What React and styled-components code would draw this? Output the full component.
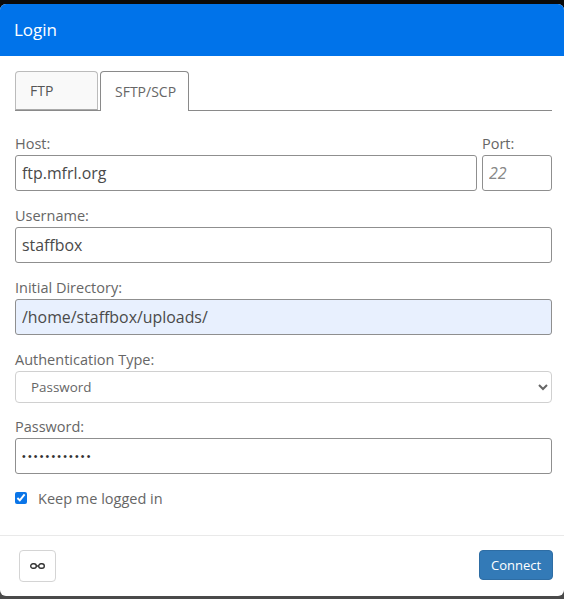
import styled, { createGlobalStyle } from 'styled-components'

const GlobalStyle = createGlobalStyle`
  html, body {
    margin: 0;
    padding: 0;
    background: #000;
    font-family: "Open Sans", "Liberation Sans", sans-serif;
  }
  * { box-sizing: border-box; }
`

const Backdrop = styled.div`
  width: 564px;
  height: 599px;
  padding: 4px 0 3px;
  overflow: hidden;
  background: linear-gradient(#0a0a0a 0 50%, #4a4a4a 50% 100%);
`

const Dialog = styled.div`
  height: 592px;
  background: #fff;
  border-radius: 6px;
  overflow: hidden;
  display: flex;
  flex-direction: column;
`

const Header = styled.div`
  height: 52px;
  padding: 0 14px 2px;
  display: flex;
  align-items: center;
  background: #0073ea;
  color: #fff;
  font-size: 17px;
  flex: none;
`

const Body = styled.div`
  flex: 1;
  min-height: 0;
  padding: 15px 12px 0 15px;
`

const Tabs = styled.div`
  display: flex;
  height: 40px;
  gap: 2px;
  border-bottom: 1px solid #8a8a8a;
`

const Tab = styled.div`
  width: ${(p) => p.$width}px;
  height: ${(p) => (p.$active ? 40 : 39)}px;
  display: flex;
  align-items: center;
  padding-left: 14px;
  font-size: 14px;
  color: ${(p) => (p.$active ? '#666' : '#555')};
  background: ${(p) => (p.$active ? '#fff' : '#f9f9f9')};
  border: 1px solid ${(p) => (p.$active ? '#8a8a8a' : '#bbb')};
  border-bottom: ${(p) => (p.$active ? '0' : '1px solid #aaa')};
  border-radius: 4px 4px 0 0;
`

const Row = styled.div`
  display: flex;
  gap: 5px;
  margin-top: ${(p) => p.$top || 16}px;
`

const Field = styled.label`
  display: block;
  flex: ${(p) => (p.$width ? `0 0 ${p.$width}px` : '1')};
  min-width: 0;
`

const Label = styled.div`
  height: 20px;
  font-size: 14.5px;
  line-height: 17px;
  color: #666;
`

const Input = styled.input`
  display: block;
  width: 100%;
  height: 36px;
  padding: 0 6px;
  font: 15.9px "Open Sans", sans-serif;
  color: #4a4a4a;
  background: ${(p) => p.$fill || '#fff'};
  border: 1px solid #8f8f8f;
  border-radius: 3px;
  outline: none;

  &::placeholder {
    color: #888;
    font-style: italic;
    font-size: 16px;
  }
`

const PasswordInput = styled(Input)`
  font-family: "Liberation Sans", sans-serif;
  font-size: 10.5px;
  letter-spacing: 2.2px;
  color: #333;
`

const Select = styled.select`
  display: block;
  width: 100%;
  height: 32px;
  padding: 0 11px;
  font: 13.4px "Open Sans", sans-serif;
  color: #666;
  background: #fff;
  border: 1px solid #d0d0d0;
  border-radius: 4px;
  outline: none;
`

const KeepRow = styled.label`
  display: flex;
  align-items: center;
  gap: 11px;
  margin-top: 14px;
  height: 20px;
  font-size: 14.5px;
  color: #666;
`

const Check = styled.input`
  width: 12px;
  height: 12px;
  margin: 0;
  accent-color: #0a75e8;
`

const Footer = styled.div`
  height: 61px;
  flex: none;
  display: flex;
  justify-content: space-between;
  align-items: flex-start;
  padding: 14px 11px 0 19px;
  border-top: 1px solid #e9e9e9;
`

const IconButton = styled.button`
  width: 37px;
  height: 32px;
  padding: 0;
  display: flex;
  align-items: center;
  justify-content: center;
  background: #fff;
  border: 1px solid #d4d4d4;
  border-radius: 4px;
  color: #333;
`

const Connect = styled.button`
  width: 74px;
  height: 30px;
  padding: 0;
  background: #337ab7;
  border: 1px solid #2e6da4;
  border-radius: 4px;
  color: #fff;
  font: 13px "Open Sans", sans-serif;
`

const ChainIcon = () => (
  <svg width="15" height="6" viewBox="0 0 15 6" fill="none" stroke="currentColor" strokeWidth="1.4">
    <rect x="0.7" y="0.7" width="5.6" height="4.6" rx="2.3" />
    <rect x="8.7" y="0.7" width="5.6" height="4.6" rx="2.3" />
    <path d="M6.3 3h2.4" />
  </svg>
)

export default function App() {
  return (
    <>
      <GlobalStyle />
      <Backdrop>
        <Dialog>
          <Header>Login</Header>
          <Body>
            <Tabs>
              <Tab $width={83}>FTP</Tab>
              <Tab $width={89} $active>SFTP/SCP</Tab>
            </Tabs>
            <Row $top={24}>
              <Field>
                <Label>Host:</Label>
                <Input defaultValue="ftp.mfrl.org" />
              </Field>
              <Field $width={70}>
                <Label>Port:</Label>
                <Input placeholder="22" />
              </Field>
            </Row>
            <Row>
              <Field>
                <Label>Username:</Label>
                <Input defaultValue="staffbox" />
              </Field>
            </Row>
            <Row>
              <Field>
                <Label>Initial Directory:</Label>
                <Input defaultValue="/home/staffbox/uploads/" $fill="#e8f0fe" />
              </Field>
            </Row>
            <Row>
              <Field>
                <Label>Authentication Type:</Label>
                <Select defaultValue="password">
                  <option value="password">Password</option>
                  <option value="key">Public Key</option>
                </Select>
              </Field>
            </Row>
            <Row $top={15}>
              <Field>
                <Label>Password:</Label>
                <PasswordInput type="password" defaultValue="************" />
              </Field>
            </Row>
            <KeepRow>
              <Check type="checkbox" defaultChecked />
              Keep me logged in
            </KeepRow>
          </Body>
          <Footer>
            <IconButton aria-label="Link">
              <ChainIcon />
            </IconButton>
            <Connect>Connect</Connect>
          </Footer>
        </Dialog>
      </Backdrop>
    </>
  )
}
